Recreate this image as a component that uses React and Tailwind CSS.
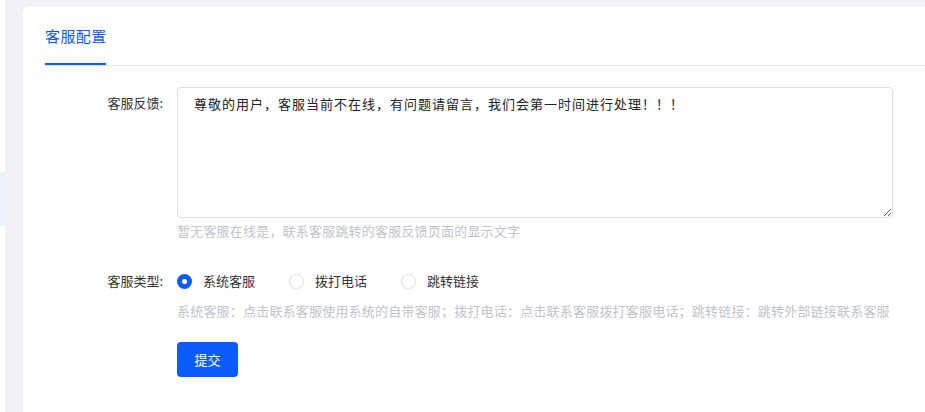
import { useState } from "react";

const options = ["系统客服", "拨打电话", "跳转链接"];

const App = () => {
  const [type, setType] = useState(0);
  const [msg, setMsg] = useState(
    "尊敬的用户，客服当前不在线，有问题请留言，我们会第一时间进行处理！！！"
  );

  return (
    <div className="flex h-[412px] w-[925px] overflow-hidden bg-white font-['Noto_Sans_CJK_SC','Noto_Sans',sans-serif]">
      {/* sidebar edge */}
      <div className="flex w-[5px] flex-col bg-white">
        <div className="mt-[172px] h-[54px] bg-[#e8f3ff]" />
      </div>

      <div className="flex flex-1 flex-col bg-[#f0f2f5] pl-[18px] pt-[7px]">
        <div className="flex-1 rounded-tl-[6px] bg-white pl-[22px]">
          {/* tabs */}
          <div className="flex h-[59px] border-b border-[#e4e7ed]">
            <div className="flex flex-col justify-end">
              <div className="pb-[17px] text-[15px] leading-[20px] tracking-[0.4px] text-[#0b5cff]">客服配置</div>
              <div className="h-[2px] w-[61px] bg-[#0b5cff]" />
            </div>
          </div>

          {/* form */}
          <div className="pt-[21px]">
            <div className="flex">
              <label className="w-[118px] pt-[7px] text-right text-[13px] leading-[18px] text-[#333]">
                客服反馈:
              </label>
              <div className="ml-[14px] flex flex-col">
                <textarea
                  value={msg}
                  onChange={(e) => setMsg(e.target.value)}
                  className="h-[131px] w-[716px] rounded-[4px] border border-[#dcdfe6] px-[16px] py-[7px] text-[13px] leading-[18px] tracking-[1px] text-[#222] outline-none"
                />
                <p className="mt-[4px] text-[13px] leading-[18px] tracking-[0.2px] text-[#c0c4cc]">
                  暂无客服在线是，联系客服跳转的客服反馈页面的显示文字
                </p>
              </div>
            </div>

            <div className="mt-[32px] flex">
              <label className="w-[118px] text-right text-[13px] leading-[18px] text-[#333]">
                客服类型:
              </label>
              <div className="ml-[14px] flex flex-col">
                <div className="flex items-center">
                  {options.map((o, i) => (
                    <button
                      key={o}
                      onClick={() => setType(i)}
                      className="mr-[34px] flex items-center"
                    >
                      {type === i ? (
                        <span className="flex h-[15px] w-[15px] items-center justify-center rounded-full bg-[#0b5cff]">
                          <span className="h-[5px] w-[5px] rounded-full bg-white" />
                        </span>
                      ) : (
                        <span className="h-[15px] w-[15px] rounded-full border border-[#dcdfe6] bg-white" />
                      )}
                      <span className="ml-[11px] text-[13px] leading-[18px] text-[#333]">{o}</span>
                    </button>
                  ))}
                </div>
                <p className="mt-[12px] text-[13px] leading-[18px] tracking-[0.2px] text-[#c0c4cc]">
                  系统客服：点击联系客服使用系统的自带客服；拨打电话：点击联系客服拨打客服电话；跳转链接：跳转外部链接联系客服
                </p>
                <button className="mt-[22px] h-[35px] w-[61px] rounded-[4px] bg-[#0b5cff] text-[13px] text-white">
                  提交
                </button>
              </div>
            </div>
          </div>
        </div>
      </div>
    </div>
  );
};

export default App;
